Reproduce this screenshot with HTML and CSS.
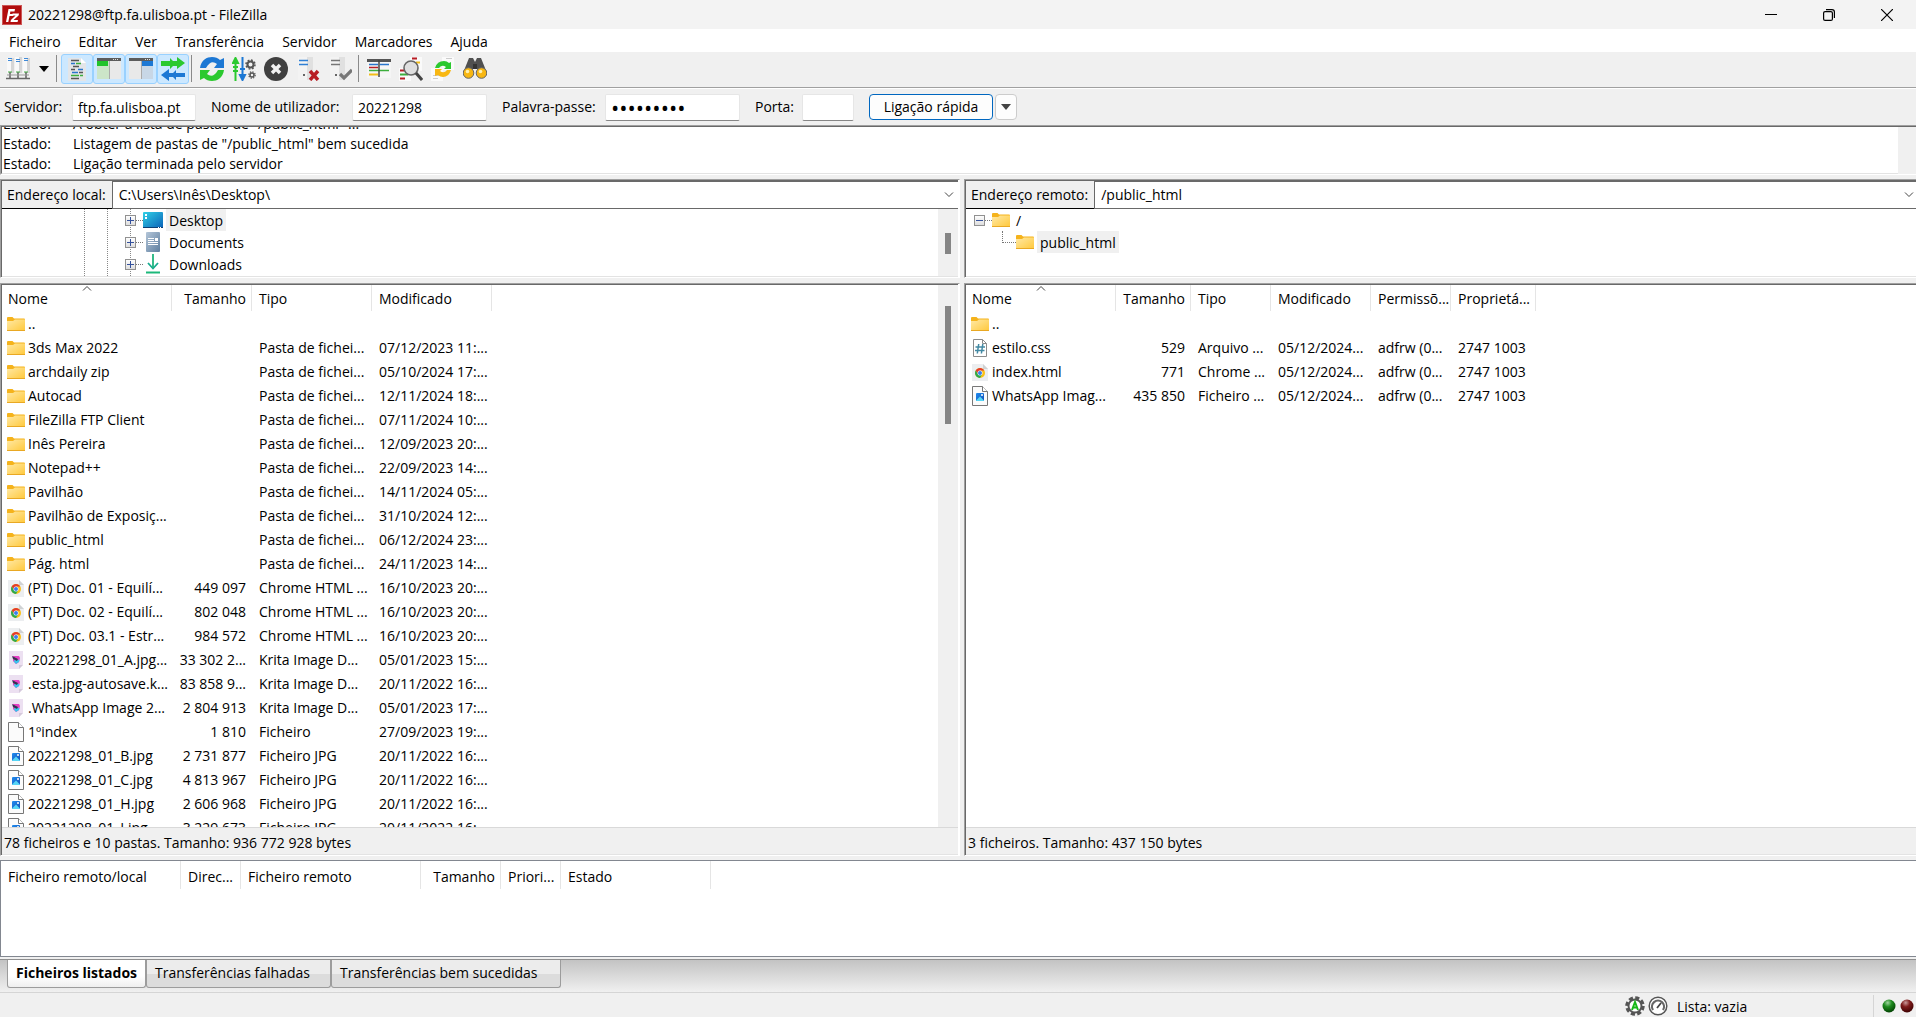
FILE: index.html
```html
<!DOCTYPE html>
<html lang="pt">
<head>
<meta charset="utf-8">
<title>20221298@ftp.fa.ulisboa.pt - FileZilla</title>
<link rel="stylesheet" href="styles.css">
</head>
<body>
<svg class="sprite" aria-hidden="true">
  <defs>
    <linearGradient id="g-folder" x1="0" y1="0" x2="1" y2="1"><stop offset="0" stop-color="#ffe9a6"/><stop offset="1" stop-color="#ffc83a"/></linearGradient>
    <linearGradient id="g-desk" x1="0" y1="0" x2="1" y2="1"><stop offset="0" stop-color="#31d0e6"/><stop offset="1" stop-color="#0a62b8"/></linearGradient>
    <linearGradient id="g-docs" x1="0" y1="0" x2="1" y2="1"><stop offset="0" stop-color="#b3c5d8"/><stop offset="1" stop-color="#5f7f9f"/></linearGradient>
    <linearGradient id="g-down" x1="0" y1="0" x2="0" y2="1"><stop offset="0" stop-color="#2cc36b"/><stop offset="1" stop-color="#12a59b"/></linearGradient>
    <linearGradient id="g-box" x1="0" y1="0" x2="0" y2="1"><stop offset="0" stop-color="#fff"/><stop offset="1" stop-color="#dcdcdc"/></linearGradient>
    <linearGradient id="g-pic" x1="0" y1="0" x2="1" y2="1"><stop offset="0" stop-color="#1f8df0"/><stop offset="1" stop-color="#1450b8"/></linearGradient>
    <radialGradient id="g-green" cx=".4" cy=".25" r=".8"><stop offset="0" stop-color="#9fd49f"/><stop offset=".4" stop-color="#1e8a1e"/><stop offset="1" stop-color="#003c00"/></radialGradient>
    <radialGradient id="g-red" cx=".4" cy=".25" r=".8"><stop offset="0" stop-color="#c99a9a"/><stop offset=".4" stop-color="#7e1c1c"/><stop offset="1" stop-color="#380000"/></radialGradient>
  </defs>
  <symbol id="folder" viewBox="0 0 18 18"><path d="M0 3q0-1 1-1h4.500l1.500 1.500h10q1 0 1 1V14H0z" fill="#f5b31c"/><path d="M0 6h6l2-1.500h10V15q0 1-1 1H1q-1 0-1-1z" fill="url(#g-folder)"/><path d="M0 15.500h18" stroke="#e9a823"/></symbol>
  <symbol id="file" viewBox="0 0 18 20"><path d="M1.500.500h10l5 5v14h-15z" fill="#fbfbfb" stroke="#777"/><path d="M11.500.500v5h5" fill="#fff" stroke="#777"/></symbol>
  <symbol id="image" viewBox="0 0 18 20"><path d="M1.500.500h10l5 5v14h-15z" fill="#fbfbfb" stroke="#777"/><path d="M11.500.500v5h5" fill="#fff" stroke="#777"/><rect x="5" y="7" width="8" height="8" rx="1" fill="url(#g-pic)"/><path d="M5 14.500l4-4 4 4-.500.500h-7z" fill="#56d5f5"/><circle cx="11" cy="9" r="1" fill="#fff"/></symbol>
  <symbol id="css" viewBox="0 0 18 20"><path d="M2.500 1.500h9l4 4v13h-13z" fill="#fff" stroke="#8b8b8b"/><path d="M11.500 1.500v4h4" fill="none" stroke="#8b8b8b"/><path d="M7.700 6L6.300 15.500M11.800 6l-1.400 9.500M4.500 9h9.500M4 12.500h9.500" stroke="#4389a3" stroke-width="1.500"/></symbol>
  <symbol id="chrome" viewBox="0 0 18 20"><path d="M1 2h11l5 5v12H1z" fill="#eceef0"/><path d="M12 2v5h5z" fill="#d0d2d4"/><circle cx="9" cy="11" r="5" fill="#fbc116"/><path d="M4.700 8.500A5 5 0 0 1 13.300 8.500H9L7 12z" fill="#e33b2e"/><path d="M4.700 8.500A5 5 0 0 0 9 16l2.200-3.800L7 12z" fill="#2da94f"/><circle cx="9" cy="11" r="2.500" fill="#fff"/><circle cx="9" cy="11" r="2" fill="#3b7ded"/></symbol>
  <symbol id="krita" viewBox="0 0 18 20"><path d="M2 1h14v14l-4 4H2z" fill="#ece0f1"/><path d="M12 19v-4h4z" fill="#d5cadb"/><path d="M6 6h6l1 2-1 4-3 2-3-3z" fill="#e63fc4"/><path d="M6.500 11l2.500 3 3-2 .500-2-3.500-.500z" fill="#36c5ec"/><path d="M5 6l6 3-1 2-4-2z" fill="#34344f"/></symbol>
  <symbol id="plus" viewBox="0 0 11 11"><rect x=".500" y=".500" width="10" height="10" fill="url(#g-box)" stroke="#919191"/><path d="M2 5.500h7M5.500 2v7" stroke="#34519c"/></symbol>
  <symbol id="minus" viewBox="0 0 11 11"><rect x=".500" y=".500" width="10" height="10" fill="url(#g-box)" stroke="#919191"/><path d="M2 5.500h7" stroke="#34519c"/></symbol>
  <symbol id="desktop" viewBox="0 0 20 20"><rect y="2" width="20" height="16" rx="1" fill="url(#g-desk)"/><path d="M0 17h20v1H0z" fill="#0b3f74"/><path d="M2 4h2v2H2zM2 7h2v2H2z" fill="#fff"/><path d="M15 17h1v1h-1zM17 17h1v1h-1z" fill="#fff"/></symbol>
  <symbol id="documents" viewBox="0 0 20 20"><rect x="3" width="14" height="20" rx="1" fill="url(#g-docs)"/><path d="M5 6.500h6M5 8.500h6M5 10.500h10M5 12.500h10M12 7.500h3" stroke="#fff"/><path d="M12 6h3v3h-3z" fill="#fff"/></symbol>
  <symbol id="downloads" viewBox="0 0 20 20"><path d="M5 9l5 5.500L15 9" fill="none" stroke="#17ab90" stroke-width="1.800"/><path d="M10 0v14" stroke="#20b57e" stroke-width="1.800"/><path d="M3 18.500h14" stroke="#1cb87a" stroke-width="2"/></symbol>
  <symbol id="chevron" viewBox="0 0 10 6"><path d="M1 .500l4 4 4-4" fill="none" stroke="#444"/></symbol>
</svg>

<header class="titlebar">
  <svg class="logo" viewBox="0 0 20 20"><rect width="20" height="20" fill="#b10d0d"/><rect x=".500" y=".500" width="19" height="19" fill="none" stroke="#e9a0a0" stroke-dasharray="1 1"/><path d="M4 17L6.500 4H13l-.500 2.500H8.300L8 9h3.500l-.400 2H7.500L6.300 17z" fill="#fff"/><path d="M10.500 8.500H17l-.400 2-5 4.500H16l-.400 2H8.500l.400-2 4.700-4.500h-3.300z" fill="#fff"/></svg>
  <h1 class="title">20221298@ftp.fa.ulisboa.pt - FileZilla</h1>
  <div class="window-buttons">
    <button aria-label="Minimizar"><svg viewBox="0 0 12 12"><path d="M0 5.500h12" stroke="#000"/></svg></button>
    <button aria-label="Restaurar"><svg viewBox="0 0 12 12"><rect x=".600" y="2.600" width="8.800" height="8.800" rx="1.500" fill="none" stroke="#000" stroke-width="1.200"/><path d="M3 .600h6q2.400 0 2.400 2.400v6" fill="none" stroke="#000" stroke-width="1.200"/></svg></button>
    <button aria-label="Fechar"><svg viewBox="0 0 12 12"><path d="M0 0l12 12M12 0L0 12" stroke="#000" stroke-width="1.200"/></svg></button>
  </div>
</header>

<nav class="menu">
  <button>Ficheiro</button><button>Editar</button><button>Ver</button><button>Transferência</button><button>Servidor</button><button>Marcadores</button><button>Ajuda</button>
</nav>

<div class="toolbar">
  <button class="tool" aria-label="Gestor de sites"><svg viewBox="0 0 24 24"><path d="M1 1h7v15H1zM17 1h7v15h-7zM9 0h7v16H9z" fill="#d6d6d6"/><path d="M1 1h4v15H1zM9 0h4v16H9zM17 1h4v15h-4z" fill="#f9f9f9"/><path d="M2 1.500h4M2 3.500h4M10 2.500h4M10 4.500h4M18 1.500h4M18 3.500h4" stroke="#3f8ad8"/><path d="M4 15v7M12 15v7M20 15v7M0 21.500h24" stroke="#666" stroke-width="1.600"/><path d="M1 18h22" stroke="#999"/><path d="M2 15h4M10 15h4M18 15h4" stroke="#4a4"/></svg></button>
  <button class="tool-arrow" aria-label="Abrir lista de sites"><svg viewBox="0 0 10 6"><path d="M0 0h10L5 6z"/></svg></button>
  <span class="separator"></span>
  <button class="tool active" aria-label="Registo de mensagens"><svg viewBox="0 0 24 24"><path d="M3 1h13l5 5v18H3z" fill="#e3e5e8"/><path d="M16 1v5h5z" fill="#fff"/><path d="M6 3.500h8M8 9.500h6M6 12.500h4M14 15.500h4M6 21.500h8" stroke="#555" stroke-width="1.500"/><path d="M6 6.500h4M13 12.500h5M7 15.500h6" stroke="#2a76cc" stroke-width="1.500"/><path d="M11 6.500h5M6 18.500h8M15 18.500h3" stroke="#3cae3c" stroke-width="1.500"/></svg></button>
  <button class="tool active" aria-label="Árvore local"><svg viewBox="0 0 24 24"><path d="M0 4h24v18H0z" fill="#e9e9e9"/><path d="M0 4h12v18H0z" fill="#cce5c8"/><path d="M0 4h11v5H0z" fill="#22c32b"/><path d="M0 1h24v3H0z" fill="#5c5c5c"/><path d="M16 2.500h6" stroke="#ddd" stroke-dasharray="1 1"/><path d="M12.500 4v18" stroke="#aaa"/></svg></button>
  <button class="tool active" aria-label="Árvore remota"><svg viewBox="0 0 24 24"><path d="M0 4h24v18H0z" fill="#e9e9e9"/><path d="M12 4h12v18H12z" fill="#c8d7e6"/><path d="M13 4h11v5H13z" fill="#1d78d4"/><path d="M0 1h24v3H0z" fill="#5c5c5c"/><path d="M16 2.500h6" stroke="#ddd" stroke-dasharray="1 1"/><path d="M12.500 4v18" stroke="#aaa"/></svg></button>
  <button class="tool active" aria-label="Fila de transferências"><svg viewBox="0 0 24 24"><path d="M0 4h9V1l3 3h4V0l8 6-8 6V9h-4l-3 3V9H0z" fill="#2bc92f"/><path d="M24 16h-9v-3l-3 3H8v-4l-8 6 8 6v-4h4l3 3v-3h9z" fill="#1d78d4"/></svg></button>
  <span class="separator"></span>
  <button class="tool" aria-label="Atualizar"><svg viewBox="0 0 24 24"><path d="M0 11C1 3 7 0 12 0q5 0 8 3l4-2v10H14l3-4q-6-5-11 4z" fill="#1d78d4"/><path d="M24 13c-1 8-7 11-12 11q-5 0-8-3l-4 2V13h10l-3 4q6 5 11-4z" fill="#2bc92f"/></svg></button>
  <button class="tool" aria-label="Processar fila"><svg viewBox="0 0 24 24"><path d="M3.500 24V5M3.500 1L1 6h5zM1 10h5M1 14h5" stroke="#2bc92f" stroke-width="2" fill="#2bc92f"/><path d="M10.500 0v19M10.500 23L8 18h5zM8 12h5" stroke="#1d78d4" stroke-width="2" fill="#1d78d4"/><circle cx="18.500" cy="7.500" r="3" fill="none" stroke="#555" stroke-width="2"/><circle cx="18.500" cy="7.500" r="4.500" fill="none" stroke="#555" stroke-width="1.500" stroke-dasharray="1.800 1.730"/><circle cx="20" cy="18" r="2" fill="none" stroke="#555" stroke-width="1.500"/><circle cx="20" cy="18" r="3.200" fill="none" stroke="#555" stroke-width="1.200" stroke-dasharray="1.300 1.210"/></svg></button>
  <button class="tool" aria-label="Cancelar"><svg viewBox="0 0 24 24"><circle cx="12" cy="12" r="12" fill="#404040"/><path d="M8 8l8 8M16 8l-8 8" stroke="#f2f2f2" stroke-width="3.500"/></svg></button>
  <button class="tool" aria-label="Desligar"><svg viewBox="0 0 24 24"><path d="M2 0h15v23H2z" fill="#e0e0e0"/><path d="M2 0h9v23H2z" fill="#f3f3f3"/><path d="M3 3.500h9M3 7.500h9" stroke="#2f7fd4" stroke-width="1.600"/><path d="M7 17h2v2H7z" fill="#666"/><path d="M14 14l8 9M22 14l-8 9" stroke="#b81d24" stroke-width="3.400"/></svg></button>
  <button class="tool" aria-label="Religar"><svg viewBox="0 0 24 24"><path d="M2 0h15v23H2z" fill="#e0e0e0"/><path d="M2 0h9v23H2z" fill="#f3f3f3"/><path d="M3 3.500h9M3 7.500h9" stroke="#777" stroke-width="1.600"/><path d="M7 17h2v2H7z" fill="#666"/><path d="M12 17l4 4 8-8" fill="none" stroke="#777" stroke-width="3.200"/></svg></button>
  <span class="separator"></span>
  <button class="tool" aria-label="Filtros"><svg viewBox="0 0 24 24"><path d="M0 4h24v17H0z" fill="#f5f5f5"/><path d="M0 2h24v3H0z" fill="#555"/><path d="M2 7.500h9M13 7.500h9" stroke="#2a76cc" stroke-width="1.500"/><path d="M2 10.500h9" stroke="#b81d24" stroke-width="1.500"/><path d="M2 13.500h20" stroke="#3cae3c" stroke-width="1.500"/><path d="M2 17.500h9" stroke="#f2bd18" stroke-width="2"/><path d="M12 3v17" stroke="#444" stroke-width="1.500"/></svg></button>
  <button class="tool" aria-label="Comparar pastas"><svg viewBox="0 0 24 24"><path d="M11 0h12v14H11zM0 11h12v13H0z" fill="#fafafa"/><path d="M13 1.500h5" stroke="#b81d24" stroke-width="2"/><path d="M17 5.500h4" stroke="#f2bd18" stroke-width="2"/><path d="M1 13.500h4" stroke="#b81d24" stroke-width="2"/><path d="M1 17.500h8" stroke="#3cae3c" stroke-width="2"/><path d="M1 21.500h5" stroke="#b81d24" stroke-width="2"/><circle cx="12" cy="11" r="7" fill="#dfdfdf" stroke="#666" stroke-width="1.600"/><path d="M17 16l6 7" stroke="#444" stroke-width="3"/></svg></button>
  <button class="tool" aria-label="Navegação sincronizada"><svg viewBox="0 0 24 24"><path d="M11 0h12v13H11zM0 11h12v13H0z" fill="#fafafa"/><path d="M2 18.500h7M2 21.500h5M15 1.500h6" stroke="#ccc"/><path d="M4 11q2-7 9-7 3 0 5 2l2-1v7h-7l2-2q-4-3-7 1z" fill="#2bc92f"/><path d="M20 13q-2 7-8 7-3 0-5-2l-3 1v-7h7l-2 2q4 3 7-1z" fill="#f8b712"/></svg></button>
  <button class="tool" aria-label="Procurar ficheiros"><svg viewBox="0 0 24 24"><path d="M6 1h4l2 4 2-4h4l6 15h-9l-1-4h-4l-1 4H0z" fill="#505050"/><path d="M10 7h4v5h-4z" fill="#333"/><circle cx="5.500" cy="16" r="5.300" fill="#f8b712" stroke="#666"/><circle cx="18.500" cy="16" r="5.300" fill="#f8b712" stroke="#666"/><circle cx="4.500" cy="14.500" r="1.800" fill="#fff0b0"/><circle cx="17.500" cy="14.500" r="1.800" fill="#fff0b0"/></svg></button>
</div>

<form class="quickconnect">
  <label for="host">Servidor:</label><input id="host" type="text" value="ftp.fa.ulisboa.pt">
  <label for="user">Nome de utilizador:</label><input id="user" type="text" value="20221298">
  <label for="pass">Palavra-passe:</label><input id="pass" type="password" value="123456789">
  <label for="port">Porta:</label><input id="port" type="text">
  <button class="connect" type="button">Ligação rápida</button>
  <button class="history" type="button" aria-label="Histórico"><svg viewBox="0 0 10 6"><path d="M0 0h10L5 6z" fill="#444"/></svg></button>
</form>

<section class="log sunken">
  <dl class="messages">
    <dt>Estado:</dt><dd>A obter a lista de pastas de "/public_html" ...</dd>
    <dt>Estado:</dt><dd>Listagem de pastas de "/public_html" bem sucedida</dd>
    <dt>Estado:</dt><dd>Ligação terminada pelo servidor</dd>
  </dl>
  <div class="track narrow"></div>
</section>

<main class="panes">
  <section class="pane">
    <div class="sunken tree-box">
      <div class="address">
        <label for="local">Endereço local:</label>
        <div class="combo"><select id="local"><option>C:\Users\Inês\Desktop\</option></select><svg class="chevron"><use href="#chevron"/></svg></div>
      </div>
      <div class="tree-view">
        <ul class="tree local-tree">
          <li><svg class="expander"><use href="#plus"/></svg><i class="twig"></i><svg class="place"><use href="#desktop"/></svg><span class="selected">Desktop</span></li>
          <li><svg class="expander"><use href="#plus"/></svg><i class="twig"></i><svg class="place"><use href="#documents"/></svg><span>Documents</span></li>
          <li><svg class="expander"><use href="#plus"/></svg><i class="twig"></i><svg class="place"><use href="#downloads"/></svg><span>Downloads</span></li>
        </ul>
        <div class="track"><div class="thumb tree-thumb"></div></div>
      </div>
    </div>
    <div class="sunken list-box">
      <div class="list-view">
        <div class="list-clip">
        <table class="files local-files">
          <colgroup><col class="c170"><col class="c80"><col class="c120"><col class="c120"></colgroup>
          <thead><tr><th>Nome<svg class="sort"><use href="#chevron"/></svg></th><th class="num">Tamanho</th><th>Tipo</th><th>Modificado</th></tr></thead>
          <tbody>
            <tr><td><svg><use href="#folder"/></svg>..</td><td></td><td></td><td></td></tr>
            <tr><td><svg><use href="#folder"/></svg>3ds Max 2022</td><td></td><td>Pasta de fichei...</td><td>07/12/2023 11:...</td></tr>
            <tr><td><svg><use href="#folder"/></svg>archdaily zip</td><td></td><td>Pasta de fichei...</td><td>05/10/2024 17:...</td></tr>
            <tr><td><svg><use href="#folder"/></svg>Autocad</td><td></td><td>Pasta de fichei...</td><td>12/11/2024 18:...</td></tr>
            <tr><td><svg><use href="#folder"/></svg>FileZilla FTP Client</td><td></td><td>Pasta de fichei...</td><td>07/11/2024 10:...</td></tr>
            <tr><td><svg><use href="#folder"/></svg>Inês Pereira</td><td></td><td>Pasta de fichei...</td><td>12/09/2023 20:...</td></tr>
            <tr><td><svg><use href="#folder"/></svg>Notepad++</td><td></td><td>Pasta de fichei...</td><td>22/09/2023 14:...</td></tr>
            <tr><td><svg><use href="#folder"/></svg>Pavilhão</td><td></td><td>Pasta de fichei...</td><td>14/11/2024 05:...</td></tr>
            <tr><td><svg><use href="#folder"/></svg>Pavilhão de Exposiç...</td><td></td><td>Pasta de fichei...</td><td>31/10/2024 12:...</td></tr>
            <tr><td><svg><use href="#folder"/></svg>public_html</td><td></td><td>Pasta de fichei...</td><td>06/12/2024 23:...</td></tr>
            <tr><td><svg><use href="#folder"/></svg>Pág. html</td><td></td><td>Pasta de fichei...</td><td>24/11/2023 14:...</td></tr>
            <tr><td><svg><use href="#chrome"/></svg>(PT) Doc. 01 - Equilí...</td><td class="num">449 097</td><td>Chrome HTML ...</td><td>16/10/2023 20:...</td></tr>
            <tr><td><svg><use href="#chrome"/></svg>(PT) Doc. 02 - Equilí...</td><td class="num">802 048</td><td>Chrome HTML ...</td><td>16/10/2023 20:...</td></tr>
            <tr><td><svg><use href="#chrome"/></svg>(PT) Doc. 03.1 - Estr...</td><td class="num">984 572</td><td>Chrome HTML ...</td><td>16/10/2023 20:...</td></tr>
            <tr><td><svg><use href="#krita"/></svg>.20221298_01_A.jpg...</td><td class="num">33 302 2...</td><td>Krita Image D...</td><td>05/01/2023 15:...</td></tr>
            <tr><td><svg><use href="#krita"/></svg>.esta.jpg-autosave.k...</td><td class="num">83 858 9...</td><td>Krita Image D...</td><td>20/11/2022 16:...</td></tr>
            <tr><td><svg><use href="#krita"/></svg>.WhatsApp Image 2...</td><td class="num">2 804 913</td><td>Krita Image D...</td><td>05/01/2023 17:...</td></tr>
            <tr><td><svg><use href="#file"/></svg>1ºindex</td><td class="num">1 810</td><td>Ficheiro</td><td>27/09/2023 19:...</td></tr>
            <tr><td><svg><use href="#image"/></svg>20221298_01_B.jpg</td><td class="num">2 731 877</td><td>Ficheiro JPG</td><td>20/11/2022 16:...</td></tr>
            <tr><td><svg><use href="#image"/></svg>20221298_01_C.jpg</td><td class="num">4 813 967</td><td>Ficheiro JPG</td><td>20/11/2022 16:...</td></tr>
            <tr><td><svg><use href="#image"/></svg>20221298_01_H.jpg</td><td class="num">2 606 968</td><td>Ficheiro JPG</td><td>20/11/2022 16:...</td></tr>
            <tr><td><svg><use href="#image"/></svg>20221298_01_I.jpg</td><td class="num">3 229 673</td><td>Ficheiro JPG</td><td>20/11/2022 16:...</td></tr>
          </tbody>
        </table>
        </div>
        <div class="track"><div class="thumb list-thumb"></div></div>
      </div>
      <p class="summary">78 ficheiros e 10 pastas. Tamanho: 936 772 928 bytes</p>
    </div>
  </section>

  <section class="pane remote">
    <div class="sunken tree-box">
      <div class="address">
        <label for="remote">Endereço remoto:</label>
        <div class="combo"><select id="remote"><option>/public_html</option></select><svg class="chevron"><use href="#chevron"/></svg></div>
      </div>
      <div class="tree-view">
        <ul class="tree remote-tree">
          <li><svg class="expander"><use href="#minus"/></svg><i class="twig"></i><svg class="folder"><use href="#folder"/></svg><span>/</span></li>
          <li class="child"><i class="elbow"></i><svg class="folder"><use href="#folder"/></svg><span class="selected">public_html</span></li>
        </ul>
      </div>
    </div>
    <div class="sunken list-box">
      <div class="list-view">
        <div class="list-clip">
        <table class="files remote-files">
          <colgroup><col class="c150"><col class="c75"><col class="c80"><col class="c100"><col class="c80"><col class="c85"></colgroup>
          <thead><tr><th>Nome<svg class="sort"><use href="#chevron"/></svg></th><th class="num">Tamanho</th><th>Tipo</th><th>Modificado</th><th>Permissõ...</th><th>Proprietá...</th></tr></thead>
          <tbody>
            <tr><td><svg><use href="#folder"/></svg>..</td><td></td><td></td><td></td><td></td><td></td></tr>
            <tr><td><svg><use href="#css"/></svg>estilo.css</td><td class="num">529</td><td>Arquivo ...</td><td>05/12/2024...</td><td>adfrw (0...</td><td>2747 1003</td></tr>
            <tr><td><svg><use href="#chrome"/></svg>index.html</td><td class="num">771</td><td>Chrome ...</td><td>05/12/2024...</td><td>adfrw (0...</td><td>2747 1003</td></tr>
            <tr><td><svg><use href="#image"/></svg>WhatsApp Imag...</td><td class="num">435 850</td><td>Ficheiro ...</td><td>05/12/2024...</td><td>adfrw (0...</td><td>2747 1003</td></tr>
          </tbody>
        </table>
        </div>
      </div>
      <p class="summary">3 ficheiros. Tamanho: 437 150 bytes</p>
    </div>
  </section>
</main>

<section class="queue">
  <table class="files queue-files">
    <colgroup><col class="c180"><col class="c60"><col class="c180"><col class="c80"><col class="c60"><col class="c150"></colgroup>
    <thead><tr><th>Ficheiro remoto/local</th><th>Direc...</th><th>Ficheiro remoto</th><th class="num">Tamanho</th><th>Priori...</th><th>Estado</th></tr></thead>
  </table>
</section>

<div class="tabs" role="tablist">
  <button class="tab current" role="tab">Ficheiros listados</button>
  <button class="tab failed" role="tab">Transferências falhadas</button>
  <button class="tab done" role="tab">Transferências bem sucedidas</button>
</div>

<footer class="statusbar">
  <svg viewBox="0 0 20 20"><circle cx="10" cy="10" r="8" fill="none" stroke="#555" stroke-width="3.500" stroke-dasharray="4 2.280"/><circle cx="10" cy="10" r="6.500" fill="#fff" stroke="#555" stroke-width="2"/><path d="M7 14l3-8 3 8M8 11.500h4" fill="none" stroke="#18b818" stroke-width="2"/></svg>
  <svg viewBox="0 0 20 20"><circle cx="10" cy="10" r="8.800" fill="#fff" stroke="#555" stroke-width="1.500"/><path d="M5 14a6 6 0 1 1 10 0" fill="none" stroke="#666" stroke-width="2.200"/><path d="M9 12l4-5" stroke="#444" stroke-width="1.800"/></svg>
  <span class="queue-state">Lista: vazia</span>
  <span class="leds"><svg viewBox="0 0 14 14"><circle cx="7" cy="7" r="6.500" fill="url(#g-green)"/></svg><svg viewBox="0 0 14 14"><circle cx="7" cy="7" r="6.500" fill="url(#g-red)"/></svg></span>
</footer>
</body>
</html>
```
FILE: styles.css
```css
* { box-sizing: border-box; }

body {
  margin: 0;
  height: 100vh;
  display: flex;
  flex-direction: column;
  overflow: hidden;
  background: #f0f0f0;
  color: #000;
  font: 14px/20px "Open Sans", "Noto Sans", sans-serif;
}

button, input, select { font: inherit; color: inherit; margin: 0; }
button { background: none; border: 0; padding: 0; }
svg { display: block; flex: none; }
.sprite { position: absolute; width: 0; height: 0; }

/* Title bar and menu */
.titlebar { display: flex; align-items: center; height: 29px; padding-left: 2px; background: #f3f3f3; flex: none; }
.logo { width: 20px; height: 20px; }
.title { margin: 0 0 0 6px; font-size: 14px; font-weight: 400; }
.window-buttons { display: flex; margin-left: auto; }
.window-buttons button { width: 58px; height: 28px; display: grid; place-items: center; }
.window-buttons svg { width: 12px; height: 12px; }

.menu { display: flex; height: 23px; background: #fff; flex: none; }
.menu button { padding: 2px 9px 0; height: 24px; }

/* Toolbar */
.toolbar { display: flex; align-items: center; height: 37px; padding: 0 2px 3px; border-bottom: 1px solid #fff; box-shadow: inset 0 -1px #a0a0a0; flex: none; }
.tool { width: 32px; height: 30px; display: grid; place-items: center; border: 1px solid transparent; border-radius: 3px; }
.tool svg { width: 24px; height: 24px; }
.tool.active { background: #cce8ff; border-color: #99d1ff; }
.tool-arrow { width: 20px; height: 30px; display: grid; place-items: center; }
.tool-arrow svg { width: 10px; height: 6px; }
.separator { width: 1px; height: 27px; margin: 0 4px 0 2px; background: #8a8a8a; }

/* Quick connect */
.quickconnect {
  display: grid;
  grid-template-columns: 68px 124px 156px 135px 118px 135px 62px 52px 139px 24px;
  align-items: center;
  height: 36px;
  padding-left: 4px;
  flex: none;
}
.quickconnect input { width: 100%; height: 27px; padding: 0 5px; border: 1px solid #e6e6e6; border-bottom-color: #868686; border-radius: 2px; background: #fff; outline: 0; }
.quickconnect input[type="password"] { font-size: 22px; }
.quickconnect label { padding-left: 15px; white-space: nowrap; }
.quickconnect label:first-child { padding-left: 0; }
.connect { height: 26px; margin: 0 0 0 15px; border: 1px solid #0067c0; border-radius: 4px; background: #fdfdfd; white-space: nowrap; }
.history { height: 26px; margin-left: 2px; border: 1px solid #ccc; border-radius: 4px; background: #fdfdfd; display: grid; place-items: center; }
.history svg { width: 10px; height: 6px; }

/* Sunken frames and scroll bars */
.sunken {
  border: 1px solid;
  border-color: #a0a0a0 #fff #fff #a0a0a0;
  background: #fff;
  overflow: hidden;
}
.sunken::before { content: ""; display: block; height: 1px; background: #696969; flex: none; }
.track { width: 20px; background: #f0f0f0; flex: none; }
.track.narrow { width: 18px; }
.thumb { width: 6px; margin-left: 7px; background: #858585; }
.tree-thumb { height: 21px; margin-top: 24px; }
.list-thumb { height: 118px; margin-top: 21px; }

.log { display: grid; grid-template: 1px 47px / 1fr 18px; flex: none; height: 50px; border-right: 0; }
.log::before { grid-column: 1 / -1; }
.messages { display: grid; grid-template-columns: 70px 1fr; grid-auto-rows: 20px; align-content: end; margin: 0; padding-left: 1px; overflow: hidden; border-left: 1px solid #696969; border-bottom: 1px solid #e3e3e3; }
.messages dt, .messages dd { margin: 0; line-height: 22px; }

/* Panes */
.panes { flex: 1; min-height: 0; display: grid; grid-template-columns: 960fr 952fr; gap: 4px; padding: 4px 0; }
.pane { display: flex; flex-direction: column; gap: 5px; min-width: 0; min-height: 0; }
.tree-box, .list-box { display: flex; flex-direction: column; box-shadow: inset 1px 0 #696969; padding-left: 1px; padding-right: 1px; }
.tree-box { height: 99px; flex: none; }
.list-box { flex: 1; min-height: 0; }
.remote .sunken { border-right: 0; padding-right: 0; }

.address { display: flex; height: 28px; background: #f0f0f0; }
.address label { height: 28px; padding: 4px 6px 3px 5px; border-bottom: 1px solid #000; white-space: nowrap; }
.combo { flex: 1; display: grid; align-items: center; border: 1px solid #696969; border-right: 0; background: #fff; }
.combo > * { grid-area: 1 / 1; }
.combo select { appearance: none; width: 100%; height: 24px; padding: 0 6px; border: 0; background: none; outline: 0; }
.chevron { width: 10px; height: 6px; justify-self: end; margin-right: 4px; pointer-events: none; }
.remote .chevron { margin-right: 2px; }

.tree-view { display: flex; flex: 1; min-height: 0; border-bottom: 1px solid #e3e3e3; }
.tree { flex: 1; margin: 0; padding: 0; list-style: none; }
.tree li { display: flex; align-items: center; height: 22px; }
.tree span { padding: 2px 3px 0; margin-left: 3px; }
.selected { background: #f0f0f0; }
.expander { width: 11px; height: 11px; }
.twig { width: 7px; height: 1px; border-top: 1px dotted #777; }
.place { width: 20px; height: 20px; }
.folder { width: 18px; height: 18px; }
.local-tree { display: grid; grid-template-rows: repeat(3, 22px); padding-left: 123px; background:
  repeating-linear-gradient(#888 0 1px, transparent 1px 2px) 82px 0 / 1px 100% no-repeat,
  repeating-linear-gradient(#888 0 1px, transparent 1px 2px) 105px 0 / 1px 100% no-repeat,
  repeating-linear-gradient(#888 0 1px, transparent 1px 2px) 128px 0 / 1px 100% no-repeat; }
.remote-tree { padding-left: 8px; }
.child { padding-left: 28px; }
.elbow { width: 14px; height: 12px; align-self: flex-start; border: 1px dotted #777; border-width: 0 0 1px 1px; }

/* File lists */
.list-view { display: flex; flex: 1; min-height: 0; }
.list-clip { flex: 1; min-width: 0; overflow: hidden; }
.files { table-layout: fixed; width: 0; border-spacing: 0; white-space: nowrap; }
.files th, .files td { padding: 1px 5px 0 7px; text-align: left; font-weight: 400; }
.files th { position: relative; height: 26px; border-right: 1px solid #e5e5e5; }
.files td { height: 24px; }
.files th:first-child { padding-left: 6px; }
.files td:first-child { padding-left: 5px; }
.files .num { text-align: right; padding-left: 0; }
.files td.num { padding-right: 6px; }
.files td svg { float: left; width: 18px; height: 20px; margin-right: 3px; }
.sort { position: absolute; left: 80px; top: 0; width: 10px; height: 6px; transform: rotate(180deg); }
.remote .sort { left: 70px; }
.c60 { width: 60px; } .c75 { width: 75px; } .c80 { width: 80px; } .c85 { width: 85px; }
.c100 { width: 100px; } .c120 { width: 120px; } .c150 { width: 150px; }
.c170 { width: 170px; } .c180 { width: 180px; }
.summary { height: 28px; margin: 0; padding: 5px 2px 0; border-top: 1px solid #d9d9d9; border-bottom: 1px solid #e3e3e3; background: #f0f0f0; flex: none; }

/* Queue, tabs and status bar */
.queue { height: 97px; border: 1px solid #828790; border-right: 0; background: #fff; flex: none; }
.queue-files th { height: 28px; padding-top: 3px; }
.queue-files th:first-child { padding-left: 7px; }
.tabs { display: flex; height: 34px; margin-top: 2px; padding: 0 0 4px 7px; border-top: 1px solid #8f8f8f; border-bottom: 1px solid #d5d5d5; background: linear-gradient(#c3c3c3, #f0f0f0); flex: none; }
.tab { padding: 0 8px 2px; border: 1px solid #9c9c9c; border-top: 0; border-radius: 0 0 3px 3px; background: linear-gradient(#ececec 50%, #dcdcdc 50%); white-space: nowrap; text-align: left; }
.tab.current { width: 139px; background: linear-gradient(#fff 60%, #efefef); font-weight: 700; }
.failed { width: 185px; }
.done { width: 230px; }
.statusbar { display: flex; align-items: center; justify-content: flex-end; gap: 3px; height: 24px; padding-top: 2px; flex: none; }
.statusbar > svg { width: 20px; height: 20px; }
.queue-state { width: 207px; padding: 2px 0 0 6px; }
.leds { display: flex; align-items: center; gap: 4px; width: 43px; height: 22px; margin-left: -8px; padding-left: 8px; border-left: 1px solid #d5d5d5; }
.leds svg { width: 14px; height: 14px; }
```
